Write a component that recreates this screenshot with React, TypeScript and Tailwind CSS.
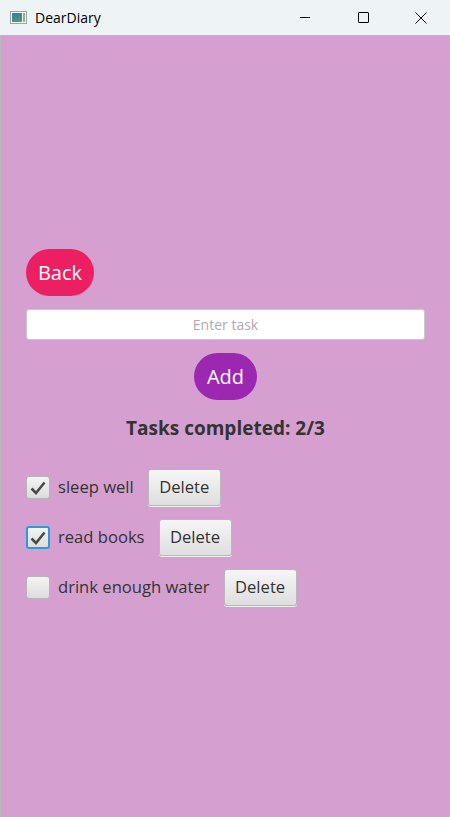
import { useState } from 'react';

type Task = {
  id: number;
  title: string;
  done: boolean;
};

const initialTasks: Task[] = [
  { id: 1, title: 'sleep well', done: true },
  { id: 2, title: 'read books', done: true },
  { id: 3, title: 'drink enough water', done: false },
];

function TitleBar() {
  return (
    <div className="flex h-[35px] items-center bg-[#eef3f5] text-[14px] text-black">
      <div className="ml-[10px] flex h-[13px] w-[17px] items-stretch border border-[#9aa3a8] bg-white p-[1px]">
        <div className="w-[10px] bg-gradient-to-b from-[#3a7fa0] to-[#4f9a6a]" />
        <div className="ml-auto w-[2px] bg-[#7bb58a]" />
      </div>
      <span className="ml-[8px]">DearDiary</span>
      <div className="ml-auto flex h-full items-center">
        <div className="flex h-full w-[58px] items-center justify-center">
          <div className="h-px w-[10px] bg-black" />
        </div>
        <div className="flex h-full w-[58px] items-center justify-center">
          <div className="h-[11px] w-[11px] rounded-[1px] border border-black" />
        </div>
        <div className="flex h-full w-[58px] items-center justify-center">
          <svg width="12" height="12" viewBox="0 0 12 12" fill="none" stroke="black" strokeWidth="1">
            <path d="M0.5 0.5 L11.5 11.5 M11.5 0.5 L0.5 11.5" />
          </svg>
        </div>
      </div>
    </div>
  );
}

function CheckBox({ checked, focused, onToggle }: { checked: boolean; focused?: boolean; onToggle: () => void }) {
  return (
    <button
      type="button"
      onClick={onToggle}
      className={
        focused
          ? 'flex h-[23px] w-[24px] items-center justify-center rounded-[3px] border-2 border-[#2a9ad8] bg-gradient-to-b from-[#f4f4f4] to-[#dcdcdc]'
          : 'flex h-[23px] w-[24px] items-center justify-center rounded-[3px] border border-[#b5b5b5] bg-gradient-to-b from-[#f4f4f4] to-[#dcdcdc]'
      }
    >
      {checked && (
        <svg width="16" height="14" viewBox="0 0 16 14" fill="none">
          <path d="M1.5 7.5 L6 12 L14.5 1.5" stroke="#4a4a4a" strokeWidth="2.6" strokeLinejoin="miter" />
        </svg>
      )}
    </button>
  );
}

export default function App() {
  const [tasks, setTasks] = useState<Task[]>(initialTasks);
  const [draft, setDraft] = useState('');

  const completed = tasks.filter((task) => task.done).length;

  const handleAdd = () => {
    if (!draft.trim()) {
      return;
    }
    setTasks((prev) => [...prev, { id: Date.now(), title: draft.trim(), done: false }]);
    setDraft('');
  };

  const toggleTask = (id: number) => {
    setTasks((prev) => prev.map((task) => (task.id === id ? { ...task, done: !task.done } : task)));
  };

  const deleteTask = (id: number) => {
    setTasks((prev) => prev.filter((task) => task.id !== id));
  };

  return (
    <div className="flex h-[817px] w-[450px] flex-col overflow-hidden bg-[#eef3f5] font-['Open_Sans','Noto_Sans',sans-serif]">
      <TitleBar />
      <div className="flex flex-1 flex-col border-l border-t border-[#b9b9b9] bg-[#d5a0d0] px-[25px] pt-[213px] text-[#333333]">
        <div>
          <button
            type="button"
            className="h-[47px] w-[68px] rounded-full bg-[#ec1f62] text-[20px] leading-none text-white"
          >
            Back
          </button>
        </div>

        <input
          value={draft}
          onChange={(event) => setDraft(event.target.value)}
          placeholder="Enter task"
          className="mt-[13px] h-[31px] w-full rounded-[3px] border border-[#c8c8c8] bg-white text-center text-[14px] text-[#333333] outline-none placeholder:text-[#b0a9ae]"
        />

        <div className="mt-[13px] flex justify-center">
          <button
            type="button"
            onClick={handleAdd}
            className="h-[47px] w-[63px] rounded-full bg-[#9c27b0] text-[20px] leading-none text-white"
          >
            Add
          </button>
        </div>

        <p className="mt-[15px] text-center text-[19px] font-bold leading-[26px] text-[#333333]">
          Tasks completed: {completed}/{tasks.length}
        </p>

        <div className="mt-[28px] flex flex-col gap-[13px]">
          {tasks.map((task, index) => (
            <div key={task.id} className="flex h-[37px] items-center">
              <CheckBox checked={task.done} focused={index === 1} onToggle={() => toggleTask(task.id)} />
              <span className="ml-[8px] text-[16.6px] text-[#333333]">{task.title}</span>
              <button
                type="button"
                onClick={() => deleteTask(task.id)}
                className="ml-[14px] h-[37px] w-[73px] rounded-[3px] border border-[#b8b8b8] bg-gradient-to-b from-[#f6f6f6] to-[#dedede] text-[16.6px] text-[#333333] shadow-[0_1px_0_#eeeeee]"
              >
                Delete
              </button>
            </div>
          ))}
        </div>
      </div>
    </div>
  );
}
